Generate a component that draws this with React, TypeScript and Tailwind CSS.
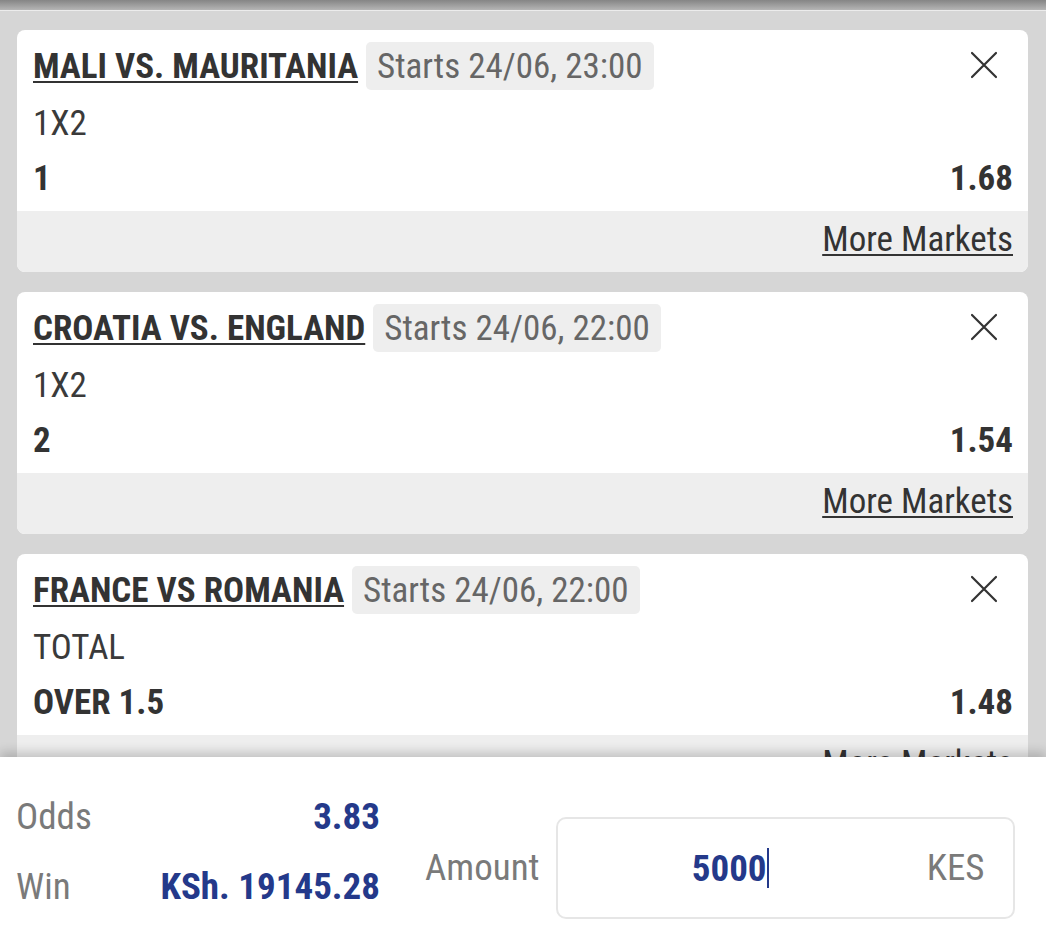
const font = { fontFamily: "'Roboto Condensed', Roboto, 'Liberation Sans', sans-serif" };

type Bet = {
  match: string;
  starts: string;
  market: string;
  pick: string;
  odds: string;
};

const bets: Bet[] = [
  { match: "MALI VS. MAURITANIA", starts: "Starts 24/06, 23:00", market: "1X2", pick: "1", odds: "1.68" },
  { match: "CROATIA VS. ENGLAND", starts: "Starts 24/06, 22:00", market: "1X2", pick: "2", odds: "1.54" },
  { match: "FRANCE VS ROMANIA", starts: "Starts 24/06, 22:00", market: "TOTAL", pick: "OVER 1.5", odds: "1.48" },
];

function CloseIcon() {
  return (
    <svg width="28" height="28" viewBox="0 0 28 28" fill="none">
      <path d="M2 2 L26 26 M26 2 L2 26" stroke="#333333" strokeWidth="2.2" strokeLinecap="round" />
    </svg>
  );
}

function BetCard({ bet }: { bet: Bet }) {
  return (
    <div className="rounded-[8px] bg-white overflow-hidden shrink-0">
      <div className="pl-[16px] pr-[15px]">
        <div className="flex items-center pt-[12px] h-[60px]">
          <span className="text-[35px] font-bold text-[#333333] underline decoration-2 underline-offset-[3px] leading-none">
            {bet.match}
          </span>
          <span className="ml-[8px] h-[48px] flex items-center px-[11px] rounded-[5px] bg-[#eeeeee] text-[35px] text-[#666666] leading-none">
            {bet.starts}
          </span>
          <span className="ml-auto mr-[15px] mt-[-2px] flex">
            <CloseIcon />
          </span>
        </div>
        <div className="mt-[12px] h-[44px] leading-[44px] text-[35px] text-[#3a3a3a]">{bet.market}</div>
        <div className="mt-[11px] h-[44px] leading-[44px] flex justify-between text-[35px] font-bold text-[#333333]">
          <span>{bet.pick}</span>
          <span>{bet.odds}</span>
        </div>
      </div>
      <div className="mt-[10px] h-[61px] bg-[#eeeeee] flex items-center justify-end pr-[15px] pb-[4px]">
        <span className="text-[35px] text-[#333333] underline decoration-2 underline-offset-[3px] leading-none">
          More Markets
        </span>
      </div>
    </div>
  );
}

export default function App() {
  return (
    <div className="w-full h-[927px] flex flex-col overflow-hidden bg-white" style={font}>
      <div className="h-[757px] bg-[#d6d6d6] overflow-hidden flex flex-col">
        <div className="h-[10px] shrink-0 bg-linear-to-b from-[#858585] to-[#b5b5b5]" />
        <div className="h-px shrink-0 bg-[#ececec]" />
        <div className="flex flex-col gap-[20px] pt-[19px] pl-[17px] pr-[18px]">
          {bets.map((b) => (
            <BetCard key={b.match} bet={b} />
          ))}
        </div>
      </div>

      <div className="relative z-10 flex-1 bg-white shadow-[0_-5px_10px_rgba(0,0,0,0.18)] flex items-start pl-[16px] pt-[25px]">
        <div className="w-[364px] flex flex-col">
          <div className="h-[70px] flex items-center justify-between">
            <span className="text-[37px] text-[#7a7a7a]">Odds</span>
            <span className="text-[37px] font-bold text-[#24398a]">3.83</span>
          </div>
          <div className="h-[70px] flex items-center justify-between">
            <span className="text-[37px] text-[#7a7a7a]">Win</span>
            <span className="text-[37px] font-bold text-[#24398a]">KSh. 19145.28</span>
          </div>
        </div>
        <div className="mt-[35px] flex items-center h-[102px]">
          <span className="ml-[45px] text-[37px] text-[#7a7a7a]">Amount</span>
          <div className="ml-[16px] w-[459px] h-[102px] rounded-[10px] border-2 border-[#e6e6e6] flex items-center">
            <div className="flex-1 flex justify-center items-center">
              <span className="text-[37px] font-bold text-[#24398a] leading-none">5000</span>
              <span className="inline-block w-[2px] h-[40px] bg-[#24398a]" />
            </div>
            <span className="pl-[24px] pr-[28px] text-[37px] text-[#7a7a7a]">KES</span>
          </div>
        </div>
      </div>
    </div>
  );
}
